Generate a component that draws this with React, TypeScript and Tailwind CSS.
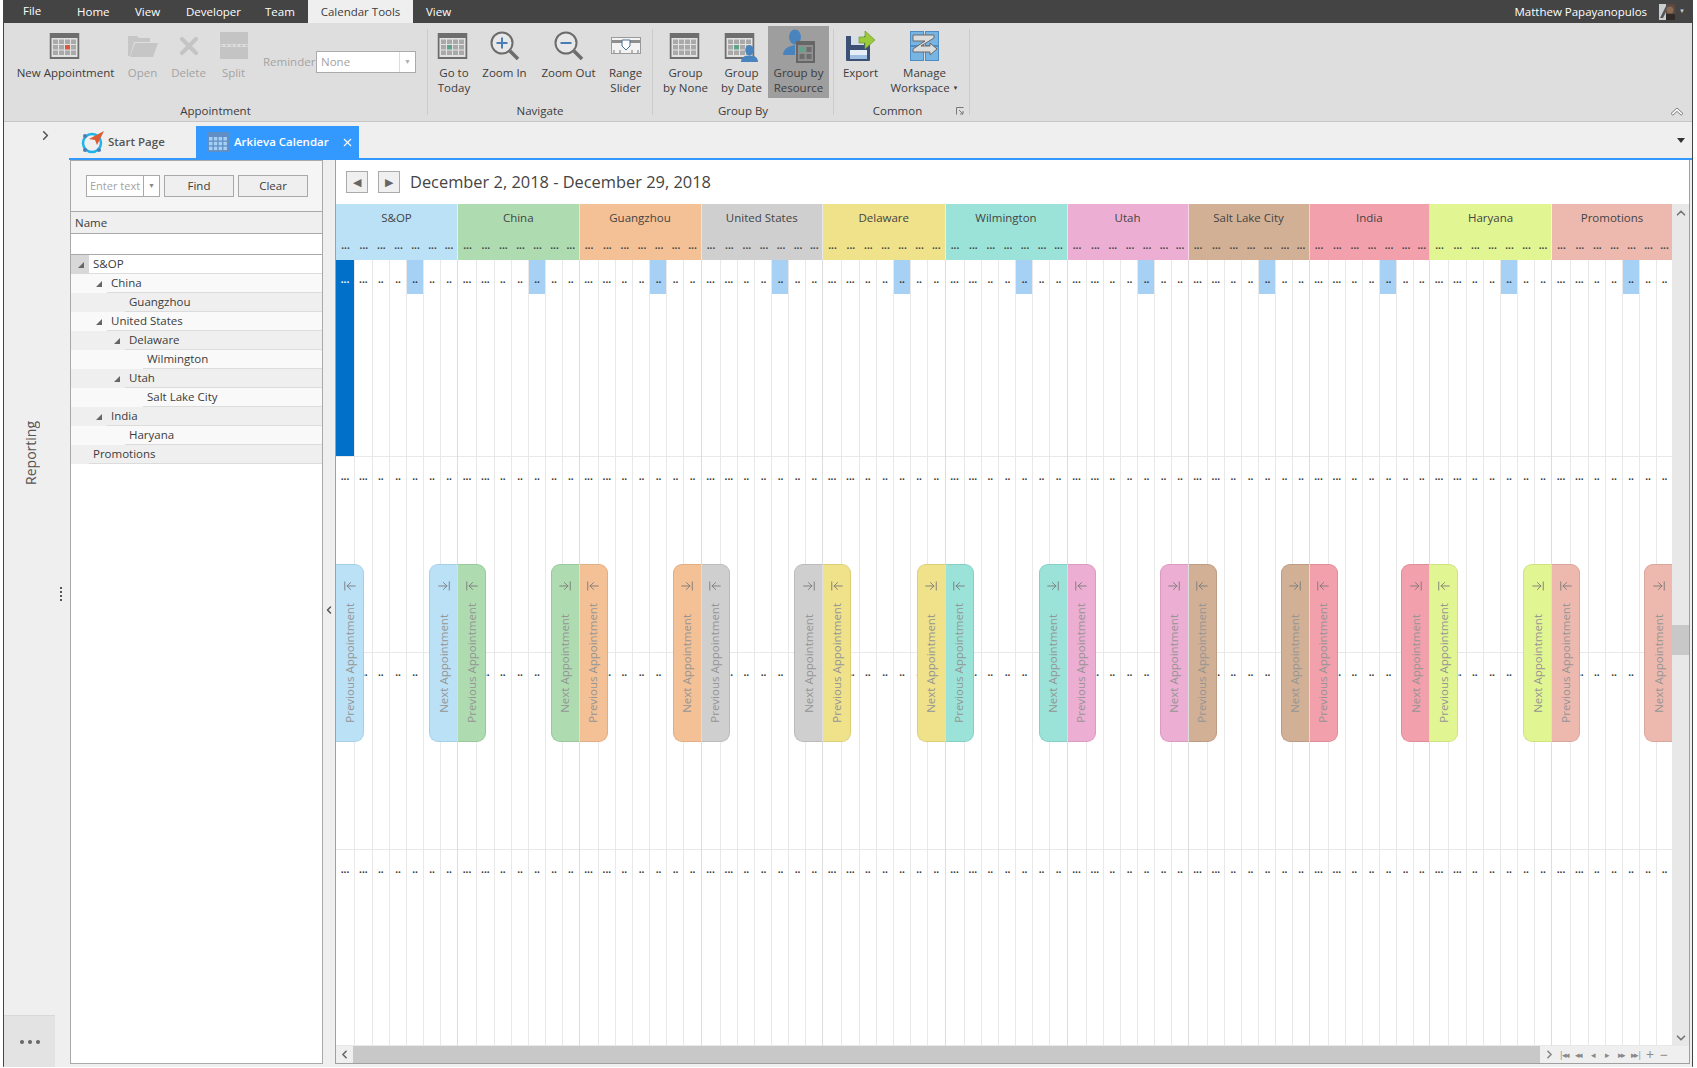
import { ArrowLeftToLine, ArrowRightToLine, ChevronDown, ChevronLeft, ChevronRight, ChevronUp, X } from 'lucide-react';
import type { ReactNode } from 'react';

const resources = [
  { name: 'S&OP', w: 'w-[122px]', bg: 'bg-[#bbe1f6]', btn: 'bg-[#bbe1f6] border-[#a6d0e8]' },
  { name: 'China', w: 'w-[121.5px]', bg: 'bg-[#aedcb0]', btn: 'bg-[#aedcb0] border-[#98c89b]' },
  { name: 'Guangzhou', w: 'w-[122px]', bg: 'bg-[#f4c095]', btn: 'bg-[#f4c095] border-[#e2ad82]' },
  { name: 'United States', w: 'w-[121.5px]', bg: 'bg-[#cfcfcf]', btn: 'bg-[#cfcfcf] border-[#bbbbbb]' },
  { name: 'Delaware', w: 'w-[122.5px]', bg: 'bg-[#efe28a]', btn: 'bg-[#efe28a] border-[#dccf78]' },
  { name: 'Wilmington', w: 'w-[122px]', bg: 'bg-[#9be3d9]', btn: 'bg-[#9be3d9] border-[#86cfc5]' },
  { name: 'Utah', w: 'w-[121px]', bg: 'bg-[#ecaed2]', btn: 'bg-[#ecaed2] border-[#d99bbf]' },
  { name: 'Salt Lake City', w: 'w-[121px]', bg: 'bg-[#d2b096]', btn: 'bg-[#d2b096] border-[#be9c83]' },
  { name: 'India', w: 'w-[120.5px]', bg: 'bg-[#f2a0ac]', btn: 'bg-[#f2a0ac] border-[#de8d99]' },
  { name: 'Haryana', w: 'w-[122px]', bg: 'bg-[#e2f593]', btn: 'bg-[#e2f593] border-[#cfe180]' },
  { name: 'Promotions', w: 'flex-1', bg: 'bg-[#edb9ae]', btn: 'bg-[#edb9ae] border-[#d9a69b]' },
];

const dayWidths = ['w-[19px]', 'w-[17.7px]', 'w-[17.3px]', 'w-[17px]', 'w-[17px]', 'w-[17px]', 'flex-1'];

const treeRows = [
  { name: 'S&OP', level: 0, open: true, bg: 'bg-white' },
  { name: 'China', level: 1, open: true, bg: 'bg-[#f9f9f9]' },
  { name: 'Guangzhou', level: 2, open: false, bg: 'bg-[#efefef]' },
  { name: 'United States', level: 1, open: true, bg: 'bg-[#f9f9f9]' },
  { name: 'Delaware', level: 2, open: true, bg: 'bg-[#efefef]' },
  { name: 'Wilmington', level: 3, open: false, bg: 'bg-[#f9f9f9]' },
  { name: 'Utah', level: 2, open: true, bg: 'bg-[#efefef]' },
  { name: 'Salt Lake City', level: 3, open: false, bg: 'bg-[#f9f9f9]' },
  { name: 'India', level: 1, open: true, bg: 'bg-[#efefef]' },
  { name: 'Haryana', level: 2, open: false, bg: 'bg-[#f9f9f9]' },
  { name: 'Promotions', level: 0, open: false, bg: 'bg-[#efefef]' },
];

const indentWidths = ['w-[18px]', 'w-[36px]', 'w-[54px]', 'w-[72px]'];

function CalendarGlyph({ accent, col = 0, row = 0 }: { accent?: string; col?: number; row?: number }) {
  return (
    <svg className="-translate-x-[1.5px]" width="30" height="26" viewBox="0 0 30 26">
      <rect width="30" height="26" fill="#6e6e6e" />
      <rect x="2" y="5" width="26" height="19" fill="#e2e2e2" />
      {[0, 1, 2].map((r) =>
        [0, 1, 2, 3].map((c) => (
          <rect
            key={`${r}-${c}`}
            x={3.5 + c * 6}
            y={6.5 + r * 5.5}
            width="5"
            height="4.5"
            fill={accent && r === row && c === col ? accent : '#a9a9a9'}
          />
        ))
      )}
    </svg>
  );
}

function FolderGlyph() {
  return (
    <svg width="30" height="24" viewBox="0 0 30 24">
      <path d="M0 2h9l2 2h11v4H6L2 22H0z" fill="#c6c6c6" />
      <path d="M7 9h23l-5 14H2z" fill="#c6c6c6" />
    </svg>
  );
}

function SplitGlyph() {
  return (
    <svg width="28" height="27" viewBox="0 0 28 27">
      <rect width="28" height="12" fill="#c4c4c4" />
      <rect y="15" width="28" height="12" fill="#c4c4c4" />
      <path d="M0 13.5h28" stroke="#c4c4c4" strokeWidth="1.5" strokeDasharray="3 2" />
    </svg>
  );
}

function ZoomGlyph({ plus }: { plus?: boolean }) {
  return (
    <svg width="30" height="30" viewBox="0 0 30 30">
      <circle cx="12" cy="12" r="10.5" fill="#e8e8e8" stroke="#6c6c6c" strokeWidth="2" />
      <path d="M20 20l8 8" stroke="#6c6c6c" strokeWidth="3.5" />
      <path d="M6.5 12h11" stroke="#4a7fb5" strokeWidth="2" />
      {plus && <path d="M12 6.5v11" stroke="#4a7fb5" strokeWidth="2" />}
    </svg>
  );
}

function SliderGlyph() {
  return (
    <svg width="30" height="18" viewBox="0 0 30 18">
      <rect x="0.5" y="0.5" width="29" height="16" fill="#f3f3f3" stroke="#9a9a9a" />
      <rect x="1" y="3" width="28" height="3" fill="#8f8f8f" />
      <path d="M3 13v3M9 13v3M21 13v3M27 13v3" stroke="#777" />
      <path d="M11 3h8v6l-4 4-4-4z" fill="#fff" stroke="#4f6f90" />
    </svg>
  );
}

function PersonGlyph({ size = 16 }: { size?: number }) {
  return (
    <svg width={size} height={size} viewBox="0 0 16 16">
      <ellipse cx="8" cy="5" rx="4" ry="5" fill="#4a84bf" />
      <path d="M0 16c0-4 3-6 5-6h6c2 0 5 2 5 6z" fill="#4a84bf" />
    </svg>
  );
}

function GroupDateGlyph() {
  return (
    <div className="relative h-[26px] w-[32px]">
      <CalendarGlyph accent="#5fa489" col={1} row={1} />
      <div className="absolute bottom-[-3px] right-0">
        <PersonGlyph size={17} />
      </div>
    </div>
  );
}

function GroupResourceGlyph() {
  return (
    <svg width="32" height="34" viewBox="0 0 32 34">
      <ellipse cx="12" cy="8" rx="6" ry="7.5" fill="#4a84bf" />
      <path d="M0 26c0-5 4-8 8-9l4-1v10z" fill="#4a84bf" />
      <rect x="13" y="12" width="19" height="22" fill="#666" />
      <rect x="15" y="16" width="15" height="16" fill="#8f8f8f" />
      <rect x="16.5" y="18" width="5" height="5" fill="#5fa489" />
      <rect x="23.5" y="18" width="5" height="5" fill="#6d6d6d" />
      <rect x="16.5" y="25" width="5" height="5" fill="#6d6d6d" />
      <rect x="23.5" y="25" width="5" height="5" fill="#6d6d6d" />
    </svg>
  );
}

function FloppyGlyph() {
  return (
    <svg width="29" height="30" viewBox="0 0 29 30">
      <path d="M0 5h19l5 5v19a1 1 0 0 1-1 1H1a1 1 0 0 1-1-1z" fill="#3c4f75" />
      <rect x="5" y="5" width="13" height="9" fill="#d6deea" />
      <rect x="4" y="19" width="17" height="9" fill="#e8eef6" />
      <rect x="4" y="24" width="17" height="4" fill="#9fc0e2" />
      <path d="M13 6h6V0l10 9-10 9v-6h-6z" fill="#9bcb3c" stroke="#6f9a24" strokeWidth="0.7" />
    </svg>
  );
}

function WorkspaceGlyph() {
  return (
    <svg width="29" height="30" viewBox="0 0 29 30">
      <rect x="0.5" y="0.5" width="13" height="14" fill="#76b4e4" stroke="#4f8cc4" />
      <rect x="15.5" y="0.5" width="13" height="14" fill="#76b4e4" stroke="#4f8cc4" />
      <rect x="0.5" y="15.5" width="13" height="14" fill="#76b4e4" stroke="#4f8cc4" />
      <rect x="15.5" y="15.5" width="13" height="14" fill="#76b4e4" stroke="#4f8cc4" />
      <path d="M3 4h21v3L11 15h9v-3l7 6-7 6v-3H3v-3L15 10H3z" fill="#dcdcdc" stroke="#6a6a6a" />
    </svg>
  );
}

function StartGlyph() {
  return (
    <svg width="24" height="24" viewBox="0 0 24 24">
      <circle cx="11" cy="13" r="9" fill="none" stroke="#1fb3ea" strokeWidth="2.5" />
      <circle cx="4" cy="6" r="2" fill="#4a7fb5" />
      <circle cx="4" cy="20" r="2" fill="#4a7fb5" />
      <circle cx="18" cy="20" r="2" fill="#4a7fb5" />
      <path d="M23 1L16 15l-2-5-6-1z" fill="#dd5a34" />
    </svg>
  );
}

function TabCalendarGlyph() {
  return (
    <svg width="22" height="20" viewBox="0 0 22 20">
      <rect width="22" height="20" fill="#5f8fc4" />
      {[0, 1, 2].map((r) =>
        [0, 1, 2, 3].map((c) => (
          <rect key={`${r}-${c}`} x={2 + c * 4.8} y={5 + r * 4.8} width="3.5" height="3.5" fill="#a6cff5" />
        ))
      )}
    </svg>
  );
}

function Avatar() {
  return (
    <svg width="16" height="16" viewBox="0 0 16 16">
      <rect width="16" height="16" fill="#5a4a40" />
      <rect width="7" height="16" fill="#c9ced0" />
      <path d="M1 14L7 2l2 2-5 10z" fill="#555" />
      <circle cx="11" cy="6" r="3.5" fill="#8a6a55" />
      <rect x="7" y="10" width="9" height="6" fill="#2f2a28" />
    </svg>
  );
}

function RibbonButton({
  width,
  icon,
  lines,
  disabled,
  active,
  caret,
}: {
  width: string;
  icon: ReactNode;
  lines: string[];
  disabled?: boolean;
  active?: boolean;
  caret?: boolean;
}) {
  return (
    <div className={`${width} ${active ? 'bg-[#9e9e9e]' : ''} flex h-[72px] shrink-0 flex-col items-center`}>
      <div className="mt-[3px] flex h-[33px] items-center justify-center">{icon}</div>
      <div className={`mt-[3px] text-center text-[11.5px] leading-[15px] ${disabled ? 'text-[#a3a3a3]' : 'text-[#3c3c3c]'}`}>
        {lines.map((line, i) => (
          <div key={line} className="whitespace-nowrap">
            {line}
            {caret && i === lines.length - 1 && <span className="ml-[3px] align-middle text-[6px]">▼</span>}
          </div>
        ))}
      </div>
    </div>
  );
}

function RibbonGroup({ width, label, children, launcher }: { width: string; label: string; children: ReactNode; launcher?: boolean }) {
  return (
    <>
      <div className={`${width} flex shrink-0 flex-col`}>
        <div className="flex h-[75px] items-start pt-[3px]">{children}</div>
        <div className={`relative mt-[5px] h-[16px] text-center text-[11.5px] leading-[16px] text-[#3c3c3c] ${launcher ? 'pr-[8px]' : ''}`}>
          {label}
          {launcher && (
            <svg className="absolute right-[5px] top-[4px]" width="8" height="8" viewBox="0 0 8 8">
              <path d="M0.5 7.5V0.5H7.5M3 3l4 4M7 4v3H4" fill="none" stroke="#777" />
            </svg>
          )}
        </div>
      </div>
      <div className="mt-[6px] h-[86px] w-px shrink-0 bg-[#cbcbcb]" />
    </>
  );
}

function TitleBar() {
  return (
    <div className="flex h-[23px] shrink-0 items-center bg-[#444444] text-[11.5px] text-white">
      <span className="ml-[19px] w-[54px] -translate-y-px">File</span>
      <span className="w-[58px]">Home</span>
      <span className="w-[51px]">View</span>
      <span className="w-[79px]">Developer</span>
      <span className="w-[43px]">Team</span>
      <span className="flex h-[23px] w-[105px] items-center justify-center bg-[#efefef] text-[#3c3c3c]">Calendar Tools</span>
      <span className="ml-[13px]">View</span>
      <span className="ml-auto">Matthew Papayanopulos</span>
      <span className="ml-[12px] flex items-center"><Avatar /></span>
      <span className="ml-[4px] mr-[7px] text-[6px] text-[#cccccc]">▼</span>
    </div>
  );
}

function Ribbon() {
  return (
    <div className="relative flex h-[99px] shrink-0 border-b border-[#c6c6c6] bg-[#dedede]">
      <RibbonGroup width="w-[423px]" label="Appointment">
        <div className="w-[5px]" />
        <RibbonButton width="w-[113px]" icon={<CalendarGlyph accent="#d9573a" col={2} row={1} />} lines={['New Appointment']} />
        <RibbonButton width="w-[41px]" disabled icon={<FolderGlyph />} lines={['Open']} />
        <RibbonButton width="w-[51px]" disabled icon={<X size={28} strokeWidth={3.5} color="#c4c4c4" />} lines={['Delete']} />
        <RibbonButton width="w-[39px]" disabled icon={<SplitGlyph />} lines={['Split']} />
        <div className="ml-[10px] mt-[25px] flex h-[22px] items-center">
          <span className="w-[53px] text-[11.5px] text-[#a3a3a3]">Reminder</span>
          <div className="flex h-[22px] w-[100px] items-center border border-[#ababab] bg-white">
            <span className="flex-1 pl-[4px] text-[11.5px] text-[#a3a3a3]">None</span>
            <span className="flex h-full w-[16px] items-center justify-center border-l border-[#dddddd] text-[7px] text-[#b0b0b0]">▼</span>
          </div>
        </div>
      </RibbonGroup>
      <RibbonGroup width="w-[224px]" label="Navigate">
        <RibbonButton width="w-[52px]" icon={<CalendarGlyph accent="#5fa489" col={1} row={1} />} lines={['Go to', 'Today']} />
        <RibbonButton width="w-[49px]" icon={<ZoomGlyph plus />} lines={['Zoom In']} />
        <RibbonButton width="w-[79px]" icon={<ZoomGlyph />} lines={['Zoom Out']} />
        <RibbonButton width="w-[35px]" icon={<SliderGlyph />} lines={['Range', 'Slider']} />
      </RibbonGroup>
      <RibbonGroup width="w-[180px]" label="Group By">
        <RibbonButton width="w-[65px]" icon={<CalendarGlyph />} lines={['Group', 'by None']} />
        <RibbonButton width="w-[47px]" icon={<GroupDateGlyph />} lines={['Group', 'by Date']} />
        <div className="w-[3px]" />
        <RibbonButton width="w-[61px]" active icon={<GroupResourceGlyph />} lines={['Group by', 'Resource']} />
      </RibbonGroup>
      <RibbonGroup width="w-[135px]" label="Common" launcher>
        <RibbonButton width="w-[53px]" icon={<FloppyGlyph />} lines={['Export']} />
        <RibbonButton width="w-[75px]" icon={<WorkspaceGlyph />} lines={['Manage', 'Workspace']} caret />
      </RibbonGroup>
      <svg className="absolute bottom-[5px] right-[8px]" width="14" height="9" viewBox="0 0 14 9">
        <path d="M1 6.5L7 1l6 5.5-1.8 1.7L7 4.4 2.8 8.2z" fill="#f4f4f4" stroke="#666666" strokeWidth="0.8" />
      </svg>
    </div>
  );
}

function TabStrip() {
  return (
    <div className="flex h-[38px] shrink-0 bg-[#efefef]">
      <div className="w-[65px] shrink-0 pl-[34px] pt-[6px]">
        <ChevronRight size={15} strokeWidth={2.5} color="#555" />
      </div>
      <div className="flex flex-1 items-end border-b-2 border-[#3399ff] pr-[1px]">
        <div className="flex h-[36px] w-[127px] shrink-0 items-center pl-[12px] pt-[4px]">
          <StartGlyph />
          <span className="ml-[3px] text-[11.5px] font-semibold text-[#555555]">Start Page</span>
        </div>
        <div className="flex h-[32px] w-[163px] shrink-0 items-center bg-[#3399ff] pl-[11px] text-white">
          <TabCalendarGlyph />
          <span className="ml-[5px] text-[11.5px] font-semibold">Arkieva Calendar</span>
          <X className="ml-[12px]" size={13} strokeWidth={2} />
        </div>
        <svg className="ml-auto mb-[15px] mr-[6px]" width="8" height="5" viewBox="0 0 8 5">
          <path d="M0 0h8L4 5z" fill="#333333" />
        </svg>
      </div>
    </div>
  );
}

function Sidebar() {
  return (
    <div className="flex w-[66px] shrink-0 bg-[#efefef]">
      <div className="flex w-[51px] flex-col">
        <div className="flex flex-1 justify-center pl-[1px] pt-[261px]">
          <span className="h-fit rotate-180 text-[14px] text-[#555555] [writing-mode:vertical-rl]">Reporting</span>
        </div>
        <div className="flex h-[52px] items-center justify-center gap-[4px] border-t border-[#d8d8d8] bg-[#e3e3e3]">
          <span className="h-[4px] w-[4px] rounded-full bg-[#666666]" />
          <span className="h-[4px] w-[4px] rounded-full bg-[#666666]" />
          <span className="h-[4px] w-[4px] rounded-full bg-[#666666]" />
        </div>
      </div>
      <div className="flex flex-1 flex-col items-center gap-[2px] pr-[4px] pt-[427px]">
        <span className="h-[2px] w-[2px] bg-[#555555]" />
        <span className="h-[2px] w-[2px] bg-[#555555]" />
        <span className="h-[2px] w-[2px] bg-[#555555]" />
        <span className="h-[2px] w-[2px] bg-[#555555]" />
      </div>
    </div>
  );
}

function TreePanel() {
  return (
    <div className="mb-[3px] flex w-[253px] shrink-0 flex-col border border-[#a9a9a9] bg-white text-[11.5px] text-[#3c3c3c]">
      <div className="flex h-[51px] shrink-0 items-center gap-[4px] border-b border-[#a9a9a9] bg-[#f5f5f5] pl-[15px]">
        <div className="flex h-[22px] w-[74px] items-center border border-[#a9a9a9] bg-white">
          <span className="flex-1 whitespace-nowrap pl-[3px] text-[11px] text-[#a3a3a3]">Enter text</span>
          <span className="flex h-full w-[16px] shrink-0 items-center justify-center border-l border-[#a9a9a9] text-[7px] text-[#888888]">▼</span>
        </div>
        <button className="h-[22px] w-[70px] border border-[#a9a9a9] bg-[#efefef]">Find</button>
        <button className="h-[22px] w-[70px] border border-[#a9a9a9] bg-[#efefef]">Clear</button>
      </div>
      <div className="flex h-[22px] shrink-0 items-center border-b border-[#a9a9a9] bg-[#efefef] pl-[4px]">Name</div>
      <div className="h-[21px] shrink-0 border-b border-[#a9a9a9] bg-white" />
      {treeRows.map((row) => (
        <div key={row.name} className={`${row.bg} flex h-[19px] shrink-0`}>
          <div className={`${indentWidths[row.level]} ${row.name === 'S&OP' ? 'bg-[#d8d8d8]' : ''} flex shrink-0 items-center justify-end pr-[5px] text-[#666666]`}>
            {row.open && (
              <svg width="6" height="6" viewBox="0 0 6 6">
                <path d="M6 0v6H0z" fill="#666666" />
              </svg>
            )}
          </div>
          <div className="flex flex-1 items-center border-b border-[#dcdcdc] pl-[4px]">{row.name}</div>
        </div>
      ))}
    </div>
  );
}

function DayCell({ dots, dark, hit }: { dots: string; dark?: boolean; hit?: boolean }) {
  return (
    <div className={`h-[196.5px] border-b border-[#e8e8e8] ${dark ? 'bg-[#0070c8] text-white' : 'text-[#333333]'}`}>
      <div className={`h-[34px] pt-[14px] text-center text-[10px] font-bold leading-[10px] ${hit ? 'bg-[#a6d0f4]' : ''}`}>{dots}</div>
    </div>
  );
}

function NavButton({ kind, color }: { kind: 'prev' | 'next'; color: string }) {
  const prev = kind === 'prev';
  return (
    <div
      className={`${color} ${prev ? 'left-0 rounded-r-[9px] border-r' : 'right-0 rounded-l-[9px] border-l'} absolute top-[304px] z-10 flex h-[178px] w-[28px] flex-col items-center border-y pb-[12px] pt-[14px]`}
    >
      {prev ? <ArrowLeftToLine size={14} strokeWidth={1.5} color="#777777" /> : <ArrowRightToLine size={14} strokeWidth={1.5} color="#777777" />}
      <div className="mt-[4px] flex flex-1 items-center justify-center">
        <span className="rotate-180 whitespace-nowrap text-[11.5px] text-[#959595] [writing-mode:vertical-rl]">
          {prev ? 'Previous Appointment' : 'Next Appointment'}
        </span>
      </div>
    </div>
  );
}

function CalendarGrid() {
  return (
    <div className="flex h-[786px] bg-white">
      {resources.map((res, ri) => (
        <div key={res.name} className={`${res.w} ${ri === 10 ? '' : 'border-r border-[#dddddd]'} relative flex`}>
          {dayWidths.map((w, di) => (
            <div key={di} className={`${w} ${di === 6 ? '' : 'border-r border-[#e8e8e8]'} shrink-0`}>
              {[0, 1, 2, 3].map((r) => (
                <DayCell key={r} dots={di < 2 ? '...' : '..'} dark={ri === 0 && di === 0 && r === 0} hit={di === 4 && r === 0} />
              ))}
            </div>
          ))}
          <NavButton kind="prev" color={res.btn} />
          <NavButton kind="next" color={res.btn} />
        </div>
      ))}
    </div>
  );
}

function ResourceHeader() {
  return (
    <div className="flex h-[56px] text-[11.5px] text-[#444444]">
      {resources.map((res, ri) => (
        <div key={res.name} className={`${res.bg} ${res.w} ${ri === 10 ? '' : 'border-r border-[#ffffff80]'} flex flex-col`}>
          <div className="mt-[5px] flex-1 text-center leading-[18px]">{res.name}</div>
          <div className="flex h-[20px]">
            {dayWidths.map((w, di) => (
              <div key={di} className={`${w} shrink-0 text-center text-[10px] font-bold leading-[10px]`}>...</div>
            ))}
          </div>
        </div>
      ))}
    </div>
  );
}

function ScrollNav() {
  const items = ['|◂◂', '◂◂', '◂', '▸', '▸▸', '▸▸|'];
  return (
    <div className="flex h-full w-[132px] shrink-0 items-center bg-[#efefef] pl-[3px] text-[#888888]">
      <ChevronRight size={13} strokeWidth={3} />
      {items.map((item) => (
        <span key={item} className="w-[14.5px] text-center text-[9px] tracking-[-2px]">{item}</span>
      ))}
      <span className="w-[14px] text-center text-[14px] leading-none">+</span>
      <span className="w-[14px] text-center text-[14px] leading-none">−</span>
    </div>
  );
}

function CalendarPanel() {
  return (
    <div className="mb-[3px] flex w-[1355px] shrink-0 flex-col border-x border-b border-[#a0a0a0] bg-white">
      <div className="flex h-[44px] shrink-0 items-center pl-[10px]">
        <button className="flex h-[22px] w-[22px] items-center justify-center border border-[#a9a9a9] bg-[#f0f0f0] text-[11px] text-[#666666]">◀</button>
        <button className="ml-[10px] flex h-[22px] w-[22px] items-center justify-center border border-[#a9a9a9] bg-[#f0f0f0] text-[11px] text-[#666666]">▶</button>
        <span className="ml-[10px] pt-px text-[16.4px] text-[#444444]">December 2, 2018 - December 29, 2018</span>
      </div>
      <div className="flex flex-1">
        <div className="flex w-[1336px] shrink-0 flex-col">
          <ResourceHeader />
          <CalendarGrid />
          <div className="flex h-[17px] bg-[#c8c8c8]">
            <div className="flex w-[17px] shrink-0 items-center justify-center bg-[#efefef]">
              <ChevronLeft size={13} strokeWidth={3} color="#666666" />
            </div>
            <div className="flex-1" />
            <ScrollNav />
          </div>
        </div>
        <div className="flex flex-1 flex-col bg-[#e8e8e8]">
          <div className="flex h-[17px] items-center justify-center">
            <ChevronUp size={14} strokeWidth={3} color="#777777" />
          </div>
          <div className="h-[404px]" />
          <div className="h-[30px] bg-[#c8c8c8]" />
          <div className="flex-1" />
          <div className="flex h-[17px] items-center justify-center">
            <ChevronDown size={14} strokeWidth={3} color="#777777" />
          </div>
          <div className="h-[17px] bg-[#efefef]" />
        </div>
      </div>
    </div>
  );
}

export default function App() {
  return (
    <div className="h-[1068px] w-[1697px] overflow-hidden bg-white pb-px pl-[3px] pr-[4px] font-['Open_Sans','Noto_Sans',sans-serif]">
      <div className="flex h-[1067px] flex-col border-x border-b border-x-[#444444] border-b-[#999999]">
        <TitleBar />
        <Ribbon />
        <TabStrip />
        <div className="flex flex-1 bg-[#efefef]">
          <Sidebar />
          <TreePanel />
          <div className="flex w-[12px] shrink-0 items-start justify-center pt-[444px]">
            <ChevronLeft size={12} strokeWidth={3} color="#555555" />
          </div>
          <CalendarPanel />
        </div>
      </div>
    </div>
  );
}
